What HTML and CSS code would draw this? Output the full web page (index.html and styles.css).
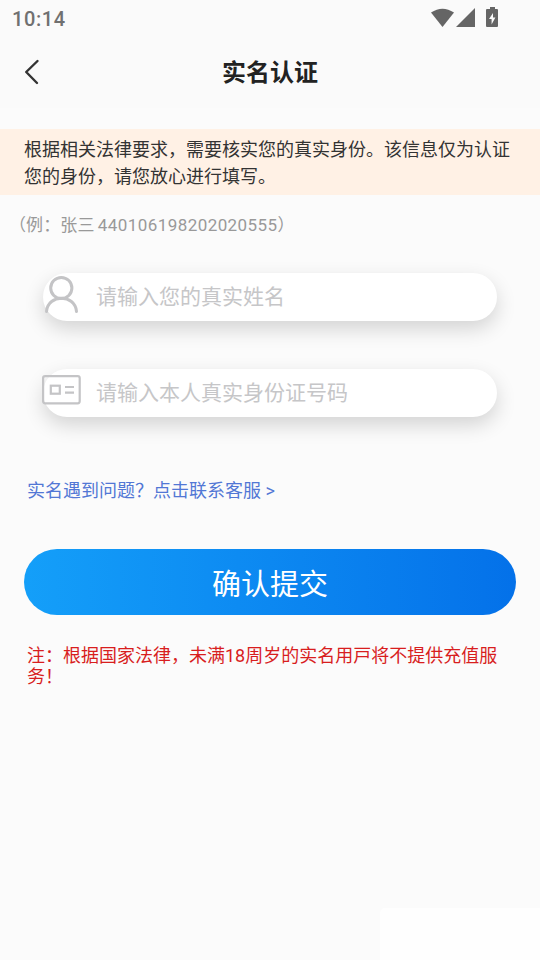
FILE: index.html
```html
<!DOCTYPE html>
<html lang="zh-CN">
<head>
<meta charset="utf-8">
<title>实名认证</title>
<link rel="stylesheet" href="styles.css">
</head>
<body>
<header class="top">
  <div class="status">
    <span class="clock">10:14</span>
    <svg class="status-icons" width="68" height="20" viewBox="0 0 68 20" fill="#656565">
      <path d="M0 4.6Q11.5-3.3 23 4.6L11.5 19Z"/>
      <path d="M44 0V19H25Z"/>
      <path fill-rule="evenodd" d="M59 -1H64V1H66Q67 1 67 2V18Q67 19 66 19H56Q55 19 55 18V2Q55 1 56 1H59ZM62 5L58 11H60.6V16.4L64.4 9.4H62Z"/>
    </svg>
  </div>
  <div class="nav">
    <svg class="back" width="16" height="26" viewBox="0 0 16 26" fill="none" stroke="#333" stroke-width="2.4" stroke-linecap="round" stroke-linejoin="round"><path d="M13.5 2L2.2 13L13 24"/></svg>
    <h1 class="title">实名认证</h1>
  </div>
</header>
<main>
  <p class="notice">根据相关法律要求，需要核实您的真实身份。该信息仅为认证您的身份，请您放心进行填写。</p>
  <p class="example">（例：张三 <span class="digits">440106198202020555</span>）</p>
  <form class="form">
    <label class="field">
      <svg class="icon" width="40" height="40" viewBox="0 0 40 40" fill="none" stroke="#c4c4c6" stroke-width="3" stroke-linecap="round"><circle cx="20.3" cy="14" r="10.6"/><path d="M5.5 37.5C7 19.8 34 19.8 35.5 37.5"/></svg>
      <input class="input" placeholder="请输入您的真实姓名">
    </label>
    <label class="field">
      <svg class="icon" width="40" height="40" viewBox="0 0 40 40" fill="none" stroke="#c4c4c6" stroke-width="2.2"><rect x="2.1" y="6.1" width="36.6" height="27.2" rx="2"/><rect x="9.8" y="15.7" width="9" height="8"/><path d="M24 17H33M24 22.6H33"/></svg>
      <input class="input" placeholder="请输入本人真实身份证号码">
    </label>
    <a class="help">实名遇到问题？点击联系客服 &gt;</a>
    <button class="submit" type="button">确认提交</button>
  </form>
  <p class="warning">注：根据国家法律，未满18周岁的实名用戸将不提供充值服务！</p>
</main>
<div class="corner"></div>
</body>
</html>
```
FILE: styles.css
```css
* { box-sizing: border-box; }
body {
  margin: 0;
  height: 960px;
  position: relative;
  overflow: hidden;
  background: #fbfbfb;
  color: #333;
  font-family: Roboto, "Noto Sans CJK SC", sans-serif;
}
.top { height: 108px; background: #fafafa; }
.status {
  height: 36px;
  padding: 0 41px 0 12px;
  display: flex;
  align-items: center;
  justify-content: space-between;
}
.clock { font-size: 20px; font-weight: 500; letter-spacing: .6px; line-height: 36px; color: #707070; padding-top: 2px; }
.status-icons { overflow: visible; }
.nav {
  height: 72px;
  padding: 0 24px;
  display: grid;
  grid-template-columns: 16px 1fr 16px;
  align-items: center;
}
.title { margin: 0; padding-top: 2px; text-align: center; font-size: 24px; line-height: 36px; font-weight: 700; color: #222; }
.notice {
  margin: 21px 0 0;
  height: 66px;
  padding: 7px 24px 5px;
  background: #fff1e5;
  font-size: 18px;
  line-height: 27px;
}
.example { margin: 17px 0 0; padding-left: 9px; font-size: 17px; line-height: 26px; letter-spacing: .1px; color: #999; }
.digits { margin-left: -1px; letter-spacing: .43px; }
.form { margin: 0 24px; padding-top: 35px; display: flex; flex-direction: column; }
.field {
  width: 454px;
  height: 48px;
  margin: 0 0 48px 19px;
  display: flex;
  align-items: center;
  border-radius: 24px;
  background: #fff;
  box-shadow: 0 8px 20px rgba(0, 0, 0, .16);
}
.icon { flex: none; margin: -6px 0 0 -2.5px; }
.input {
  flex: 1;
  min-width: 0;
  height: 48px;
  margin-left: 15.5px;
  padding: 0;
  border: 0;
  outline: 0;
  background: transparent;
  font: 21px/48px Roboto, "Noto Sans CJK SC", sans-serif;
}
.input::placeholder { color: #c6c6c8; opacity: 1; }
.help { margin: 11px 0 0 3px; padding-top: 1px; font-size: 18px; line-height: 27px; color: #5277d5; }
.submit {
  height: 66px;
  margin-top: 45px;
  padding: 5px 0 0;
  border: 0;
  border-radius: 33px;
  background: linear-gradient(90deg, #149ff9, #0471e9);
  color: #fff;
  font: 29px/44px Roboto, "Noto Sans CJK SC", sans-serif;
}
.warning { margin: 30px 27px 0; font-size: 18px; line-height: 21px; color: #d81e1e; }
.corner { position: absolute; right: 0; bottom: 0; width: 160px; height: 52px; border-top-left-radius: 5px; background: #fefefe; }
```
